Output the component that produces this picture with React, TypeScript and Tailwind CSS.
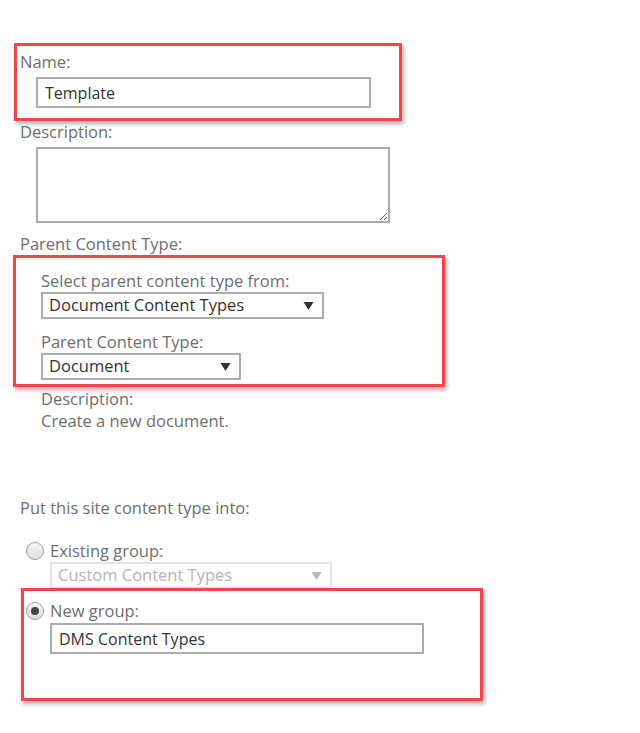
import React from "react";

const font = { fontFamily: '"Open Sans", "Liberation Sans", sans-serif' };

function Arrow({ disabled }: { disabled?: boolean }) {
  return (
    <svg width="11" height="10" viewBox="0 0 11 10" className="shrink-0">
      <path d="M0.5 1 L10.5 1 L5.5 9 Z" fill={disabled ? "#b8b8b8" : "#333333"} />
    </svg>
  );
}

function Select({ label, width, disabled }: { label: string; width: string; disabled?: boolean }) {
  return (
    <div
      className={`flex h-[27px] items-center justify-between border-2 pl-[6px] pr-[8px] text-[16.5px] ${width} ${
        disabled ? "border-[#e3e3e3] text-[#b3b3b3]" : "border-[#ababab] text-[#333]"
      }`}
    >
      <span className="leading-none">{label}</span>
      <Arrow disabled={disabled} />
    </div>
  );
}

function Radio({ checked }: { checked?: boolean }) {
  return (
    <span className="flex h-[18px] w-[18px] shrink-0 items-center justify-center rounded-full border border-[#a0a0a0] bg-gradient-to-b from-[#f6f6f6] to-[#dcdcdc]">
      {checked && <span className="h-[8px] w-[8px] rounded-full bg-[#444]" />}
    </span>
  );
}

function Label({ children, className = "" }: { children: React.ReactNode; className?: string }) {
  return <div className={`h-[20px] text-[16.5px] leading-[20px] text-[#6e6e6e] ${className}`}>{children}</div>;
}

export default function App() {
  return (
    <div className="relative h-[733px] w-[640px] overflow-hidden bg-white" style={font}>
      <div className="pl-[20px] pt-[52px]">
        {/* Name */}
        <Label>Name:</Label>
        <input
          readOnly
          defaultValue="Template"
          className="ml-[16px] mt-[5px] block h-[31px] w-[335px] border-2 border-[#ababab] px-[7px] text-[16px] text-[#333] outline-none"
          style={font}
        />

        {/* Description */}
        <Label className="mt-[14px]">Description:</Label>
        <textarea
          readOnly
          className="ml-[16px] mt-[5px] block h-[76px] w-[354px] border-2 border-[#ababab] outline-none"
        />

        {/* Parent content type */}
        <Label className="mt-[11px]">Parent Content Type:</Label>
        <div className="pl-[21px]">
          <Label className="mt-[17px]">Select parent content type from:</Label>
          <div className="mt-[1px]">
            <Select label="Document Content Types" width="w-[283px]" />
          </div>
          <Label className="mt-[13px]">Parent Content Type:</Label>
          <div className="mt-[1px]">
            <Select label="Document" width="w-[200px]" />
          </div>
          <Label className="mt-[9px]">Description:</Label>
          <Label className="mt-[2px]">Create a new document.</Label>
        </div>

        {/* Group */}
        <Label className="mt-[67px]">Put this site content type into:</Label>
        <div className="mt-[23px] pl-[6px]">
          <div className="flex items-center gap-[6px]">
            <Radio />
            <Label>Existing group:</Label>
          </div>
          <div className="ml-[24px] mt-[1px]">
            <Select label="Custom Content Types" width="w-[282px]" disabled />
          </div>
          <div className="mt-[12px] flex items-center gap-[6px]">
            <Radio checked />
            <Label>New group:</Label>
          </div>
          <input
            readOnly
            defaultValue="DMS Content Types"
            className="ml-[24px] mt-[2px] block h-[31px] w-[374px] border-2 border-[#ababab] px-[7px] text-[16px] text-[#333] outline-none"
            style={font}
          />
        </div>
      </div>

      {/* annotation boxes */}
      <div className="pointer-events-none absolute left-[14px] top-[43px] h-[78px] w-[388px] border-[3px] border-[#f5454b] shadow-[2px_3px_4px_rgba(0,0,0,0.3)]" />
      <div className="pointer-events-none absolute left-[13px] top-[255px] h-[132px] w-[432px] border-[3px] border-[#f5454b] shadow-[2px_3px_4px_rgba(0,0,0,0.3)]" />
      <div className="pointer-events-none absolute left-[21px] top-[588px] h-[113px] w-[462px] border-[3px] border-[#f5454b] shadow-[2px_3px_4px_rgba(0,0,0,0.3)]" />
    </div>
  );
}
